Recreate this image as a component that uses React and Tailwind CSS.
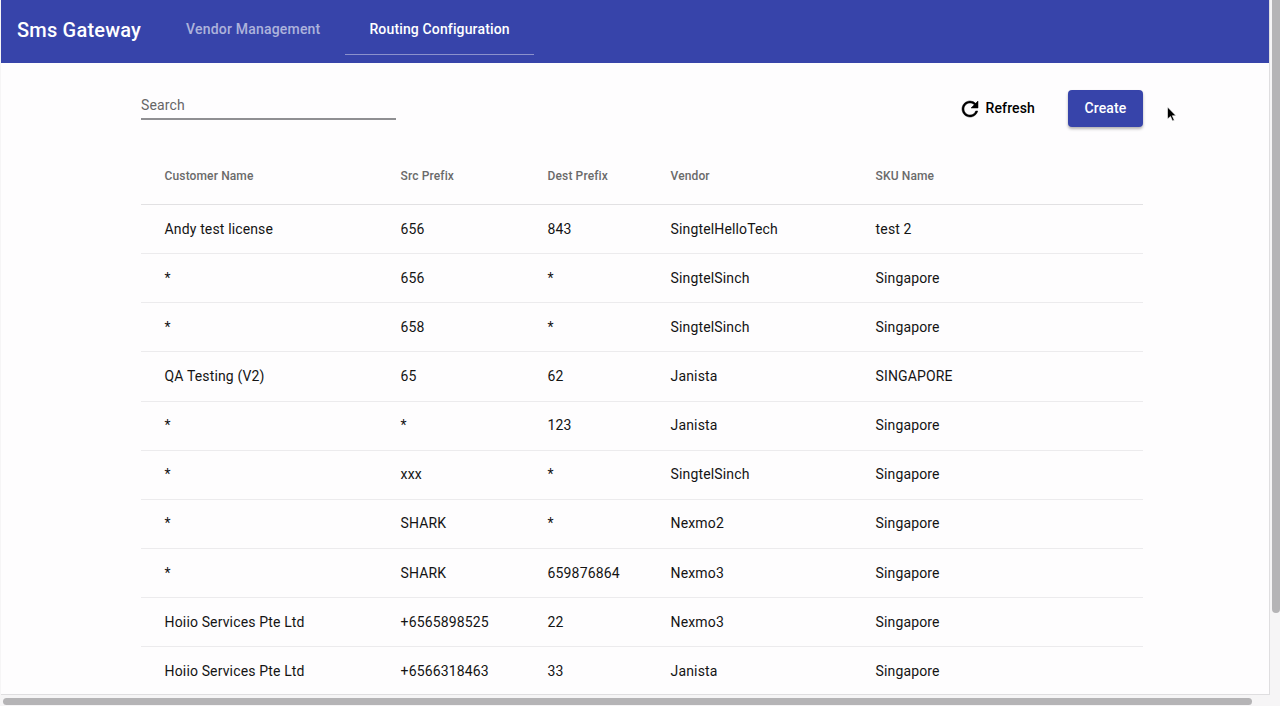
import React from "react";

const rows = [
  ["Andy test license", "656", "843", "SingtelHelloTech", "test 2"],
  ["*", "656", "*", "SingtelSinch", "Singapore"],
  ["*", "658", "*", "SingtelSinch", "Singapore"],
  ["QA Testing (V2)", "65", "62", "Janista", "SINGAPORE"],
  ["*", "*", "123", "Janista", "Singapore"],
  ["*", "xxx", "*", "SingtelSinch", "Singapore"],
  ["*", "SHARK", "*", "Nexmo2", "Singapore"],
  ["*", "SHARK", "659876864", "Nexmo3", "Singapore"],
  ["Hoiio Services Pte Ltd", "+6565898525", "22", "Nexmo3", "Singapore"],
  ["Hoiio Services Pte Ltd", "+6566318463", "33", "Janista", "Singapore"],
];

const cols = "grid grid-cols-[236px_147px_123px_205px_1fr] pl-[23.6px] items-center";

export default function App() {
  return (
    <div className="relative w-[1280px] h-[706px] overflow-hidden bg-[#f6f5f6] font-['Roboto',sans-serif] flex flex-col">
      <div className="flex h-[695px] overflow-hidden">
        <div className="w-[1270px] h-[695px] ml-px overflow-hidden bg-[#fefdfe] border-r border-b border-[#dfdee0]">
          <header className="h-[63px] bg-[#3744aa] flex text-white">
            <div className="pl-4 pr-[45px] pt-[17px] text-[20px] leading-[26px] font-medium tracking-[0.2px]">Sms Gateway</div>
            <div className="w-[159px] pt-[20px] text-[14px] leading-[18px] font-medium tracking-[0.2px] text-white/60">Vendor Management</div>
            <div className="w-[189px] h-[55px] pt-[20px] text-center text-[14px] leading-[18px] font-medium tracking-[0.14px] border-b border-[#8b91cc]">Routing Configuration</div>
          </header>
          <main className="pl-[140px] w-[1142px]">
            <div className="flex items-start justify-between pt-[27px] h-[113px]">
              <div className="w-[255px] h-[30px] border-b-2 border-[#8f8f92] text-[14px] leading-[30px] tracking-[0.14px] text-[#666666]">Search</div>
              <div className="flex items-center">
                <button className="flex items-center h-9 text-[14px] font-medium tracking-[0.14px] text-black mr-[33px]">
                  <svg width="24" height="24" viewBox="0 0 24 24" fill="currentColor" stroke="currentColor" strokeWidth="0.5" className="mr-[3px]">
                    <path d="M17.65 6.35A7.958 7.958 0 0 0 12 4c-4.42 0-7.99 3.58-7.99 8s3.57 8 7.99 8c3.73 0 6.84-2.55 7.73-6h-2.08A5.99 5.99 0 0 1 12 18c-3.31 0-6-2.69-6-6s2.69-6 6-6c1.66 0 3.14.69 4.22 1.78L13 11h7V4l-2.35 2.35z" />
                  </svg>
                  Refresh
                </button>
                <button className="w-[75px] h-[37px] rounded bg-[#3744aa] text-white text-[14px] font-medium tracking-[0.14px] shadow-[0_2px_3px_rgba(0,0,0,0.3)]">Create</button>
              </div>
            </div>
            <div className={`${cols} h-[29px] text-[12px] font-medium tracking-[0.12px] text-[#6a6a6a] border-b border-[#e2e1e3] !items-start`}>
              {["Customer Name", "Src Prefix", "Dest Prefix", "Vendor", "SKU Name"].map((h) => (
                <div key={h} className="-mt-[7px] leading-[14px]">{h}</div>
              ))}
            </div>
            {rows.map((r, i) => (
              <div key={i} className={`${cols} h-[49.15px] text-[14px] tracking-[0.14px] text-[#141414] border-b border-[#ecebed]`}>
                {r.map((c, j) => (
                  <div key={j}>{c}</div>
                ))}
              </div>
            ))}
          </main>
        </div>
        <div className="ml-[1px] w-[9px] flex justify-end">
          <div className="w-[8px] h-[613px] rounded-b bg-[#b5b4b6]" />
        </div>
      </div>
      <div className="flex-1 pt-[3px] pl-[3px]">
        <div className="w-[1249px] h-[7px] rounded bg-[#b5b4b6]" />
      </div>
      <svg className="absolute left-[1166px] top-[106px]" width="11" height="17" viewBox="0 0 11 17">
        <path d="M1.5 1v12l3-2.6 2 4.6 1.8-.8-2-4.5H10z" fill="#000" stroke="#fff" strokeWidth="0.6" />
      </svg>
    </div>
  );
}
